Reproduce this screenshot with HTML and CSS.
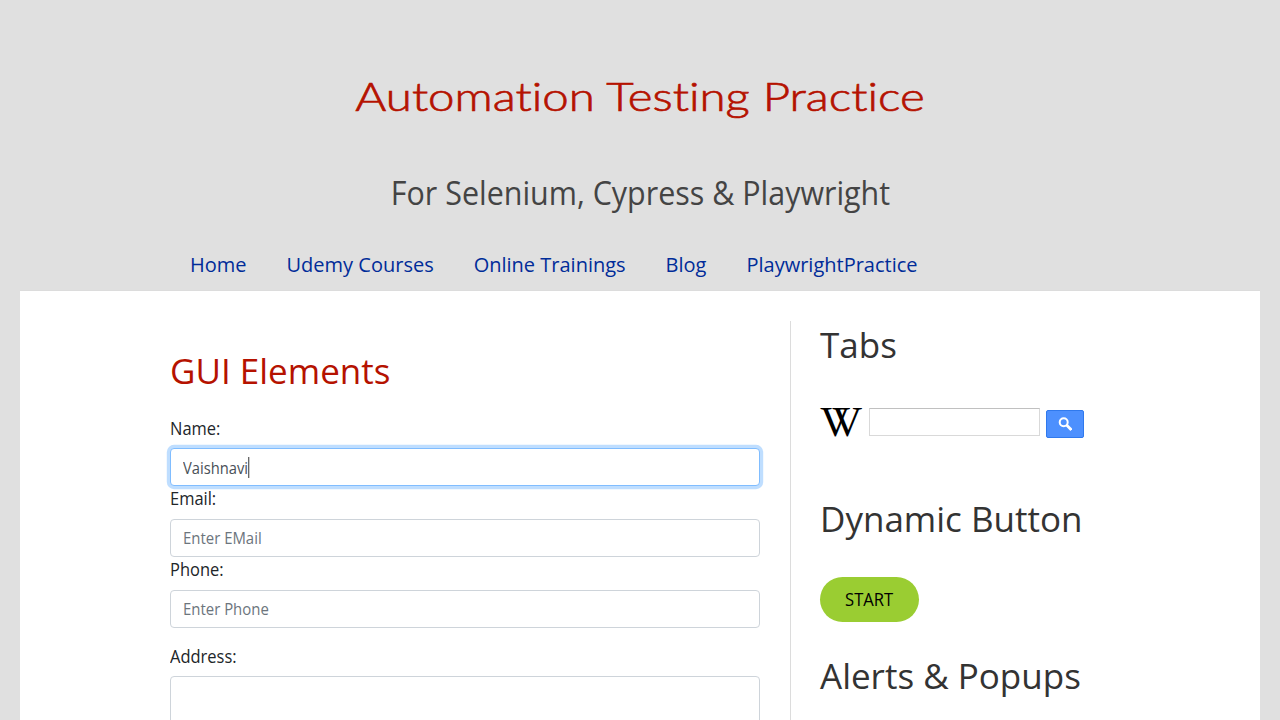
FILE: index.html
```html
<!DOCTYPE html>
<html lang="en">
<head>
<meta charset="utf-8">
<title>Automation Testing Practice</title>
<link rel="stylesheet" href="styles.css">
</head>
<body>
<header class="header">
  <h1 class="title"><span class="title-text">Automation Testing Practice</span></h1>
  <p class="subtitle"><span class="subtitle-text">For Selenium, Cypress &amp; Playwright</span></p>
</header>
<nav class="nav">
  <a class="nav-link">Home</a>
  <a class="nav-link">Udemy Courses</a>
  <a class="nav-link">Online Trainings</a>
  <a class="nav-link">Blog</a>
  <a class="nav-link">PlaywrightPractice</a>
</nav>
<div class="content">
  <main class="main">
    <h2 class="section-title">GUI Elements</h2>
    <form class="form">
      <label class="label label-first">Name:</label>
      <div class="field field-focus"><span class="value">Vaishnavi<span class="caret"></span></span></div>
      <label class="label">Email:</label>
      <div class="field"><span class="placeholder">Enter EMail</span></div>
      <label class="label">Phone:</label>
      <div class="field"><span class="placeholder">Enter Phone</span></div>
      <label class="label label-address">Address:</label>
      <div class="field field-area"></div>
    </form>
  </main>
  <aside class="sidebar">
    <h2 class="widget-title">Tabs</h2>
    <div class="search">
      <svg class="logo" width="42" height="30" viewBox="0 0 42 30">
        <text class="logo-letter" x="0 12" y="28">VV</text>
      </svg>
      <div class="search-input"></div>
      <div class="search-button">
        <svg width="14" height="14" viewBox="0 0 14 14" fill="none" stroke="#fff" stroke-width="2">
          <circle cx="5.7" cy="5.2" r="4"/>
          <path d="M8.8 8.3l4.6 4.6" stroke-width="2.8"/>
        </svg>
      </div>
    </div>
    <h2 class="widget-title">Dynamic Button</h2>
    <div class="start"><span class="start-text">START</span></div>
    <h2 class="widget-title">Alerts &amp; Popups</h2>
  </aside>
</div>
</body>
</html>
```

FILE: styles.css
```css
* { box-sizing: border-box; }
body {
  margin: 0;
  height: 720px;
  overflow: hidden;
  background: #e0e0e0;
  font-family: "Open Sans", "Noto Sans", sans-serif;
  color: #212529;
}
h1, h2, p { margin: 0; font-weight: 400; }
.header { height: 240px; padding-top: 69px; text-align: center; white-space: nowrap; }
.title { height: 54px; line-height: 54px; color: #b51200; font-size: 40px; font-family: Lato, sans-serif; }
.title-text { display: inline-block; transform: scaleX(1.186); font-weight: 300; font-variant-ligatures: none; -webkit-text-stroke: 0.7px #b51200; }
.subtitle { margin-top: 45px; line-height: 50px; font-size: 32px; color: #444; }
.subtitle-text { display: inline-block; padding-left: 1px; transform: scaleX(0.951); }
.nav { display: flex; height: 51px; margin: 0 20px; padding-left: 150px; border-bottom: 1px solid #dcdcdc; }
.nav-link { padding: 0 20px; line-height: 50px; font-size: 20px; color: #002c99; }
.content { display: flex; height: 429px; margin: 0 20px; padding: 30px 150px 0; background: #fff; overflow: hidden; }
.main { width: 620px; flex: none; padding-right: 30px; }
.section-title { margin-top: 25px; line-height: 50px; font-size: 35px; color: #b51200; }
.form { margin-top: 19px; }
.label { display: block; height: 33px; line-height: 24px; font-size: 18px; transform: scaleX(0.915); transform-origin: left; }
.label-first { padding-top: 1px; }
.field {
  display: flex;
  align-items: center;
  height: 38px;
  padding: 0 12px;
  border: 1px solid #ced4da;
  border-radius: 4px;
  font-size: 16px;
  background: #fff;
}
.field-focus { border-color: #80bdff; box-shadow: 0 0 0 3.2px #bfdeff; padding-top: 2px; }
.value { display: flex; align-items: center; color: #495057; transform: scaleX(0.92); transform-origin: left; }
.caret { width: 1px; height: 21px; margin-top: -2px; background: #222; }
.placeholder { color: #6c757d; transform: scaleX(0.933); transform-origin: left; }
.label-address { height: 32px; margin-top: 16px; }
.field-area { height: 96px; }
.sidebar { flex: 1; padding-left: 29px; border-left: 1px solid #dcdcdc; }
.widget-title { height: 50px; line-height: 48px; font-size: 35px; color: #333; }
.search { display: flex; height: 124px; padding-top: 37px; }
.logo { margin-right: 7px; overflow: visible; }
.logo-letter { font-family: "Liberation Serif", serif; font-size: 42px; }
.search-input { width: 171px; height: 28px; border: 1px solid #d9d9d9; border-top-color: #c0c0c0; }
.search-button {
  display: flex;
  align-items: center;
  justify-content: center;
  width: 38px;
  height: 28px;
  margin: 2px 0 0 6px;
  border: 1px solid #3079ed;
  border-radius: 2px;
  background: #4d90fe;
}
.start {
  width: 99px;
  height: 45px;
  margin: 32px 0 30px;
  border-radius: 23px;
  background: #9acd32;
  color: #000;
  font-size: 18px;
  line-height: 45px;
  text-align: center;
}
.start-text { display: inline-block; transform: scaleX(0.92); }
```
